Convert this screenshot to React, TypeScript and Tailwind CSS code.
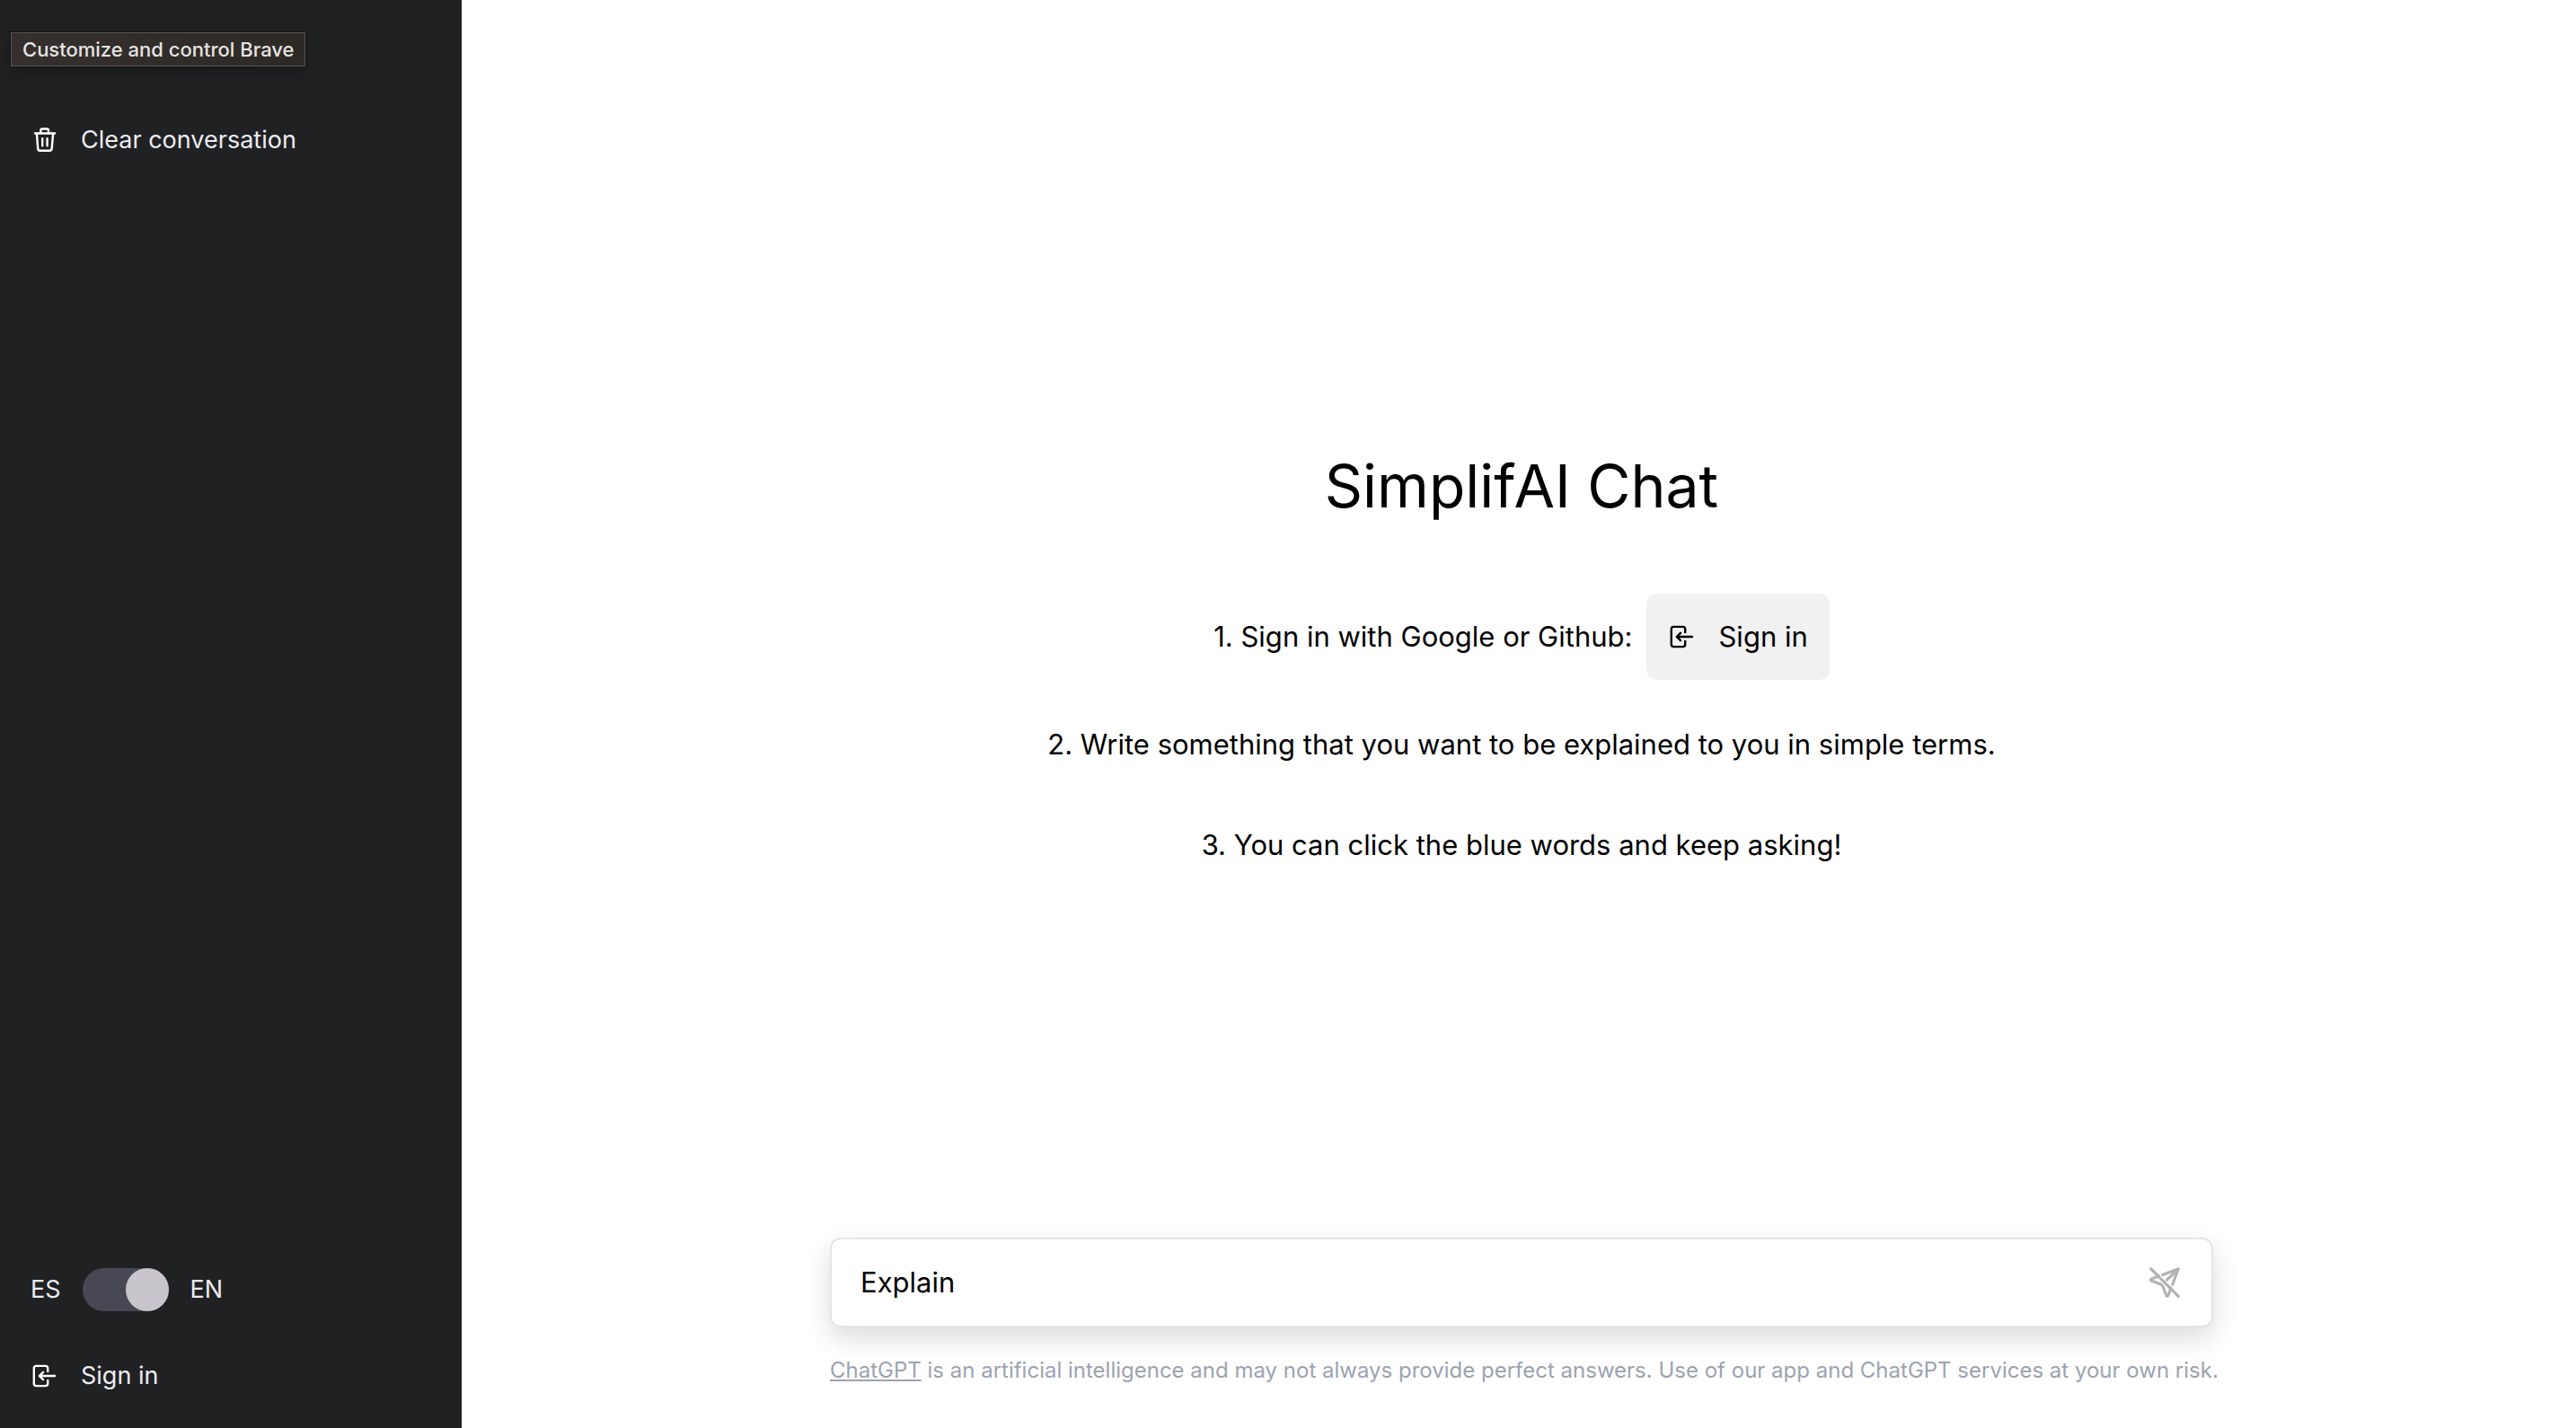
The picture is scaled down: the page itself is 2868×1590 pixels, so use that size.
import { useState } from "react";

function TrashIcon() {
  return (
    <svg viewBox="0 0 32 32" className="size-8 shrink-0" fill="none" stroke="currentColor" strokeWidth="2.4" strokeLinecap="round" strokeLinejoin="round" aria-hidden="true">
      <path d="M5 8.5H27" />
      <path d="M11.3 8V5.2Q11.3 3.5 13 3.5H18.3Q20 3.5 20 5.2V8" />
      <path d="M6.9 8.8L8.2 25.3Q8.4 27.7 10.6 27.7H21.2Q23.4 27.7 23.7 25.3L25.1 8.8" />
      <path d="M13.2 14.3V22.3M18.6 14.3V22.3" />
    </svg>
  );
}

function SignInIcon() {
  return (
    <svg viewBox="0 0 32 32" className="size-8 shrink-0" fill="none" stroke="currentColor" strokeWidth="2.4" strokeLinecap="butt" strokeLinejoin="round" aria-hidden="true">
      <path d="M19.2 12V7.5Q19.2 4.9 16.6 4.9H6.4Q3.8 4.9 3.8 7.5V24.5Q3.8 27.1 6.4 27.1H16.6Q19.2 27.1 19.2 24.5V20" />
      <path d="M10 16H27M14 11.8L9.8 16L14 20.2" strokeLinecap="round" />
    </svg>
  );
}

function SendOffIcon() {
  return (
    <svg viewBox="0 0 40 40" className="size-10" fill="none" stroke="currentColor" strokeWidth="3.2" strokeLinecap="round" strokeLinejoin="round" aria-hidden="true">
      <path d="M4.7 4.7L35.3 35.3" />
      <path d="M17.7 11.4L35.2 4.8L28.7 22.3" />
      <path d="M33.5 6.5L22.5 17" />
      <path d="M13.5 13L5.2 16.1Q3.7 17 5.2 18L16 22L17.8 23.8L22 34.5Q23 36 23.9 34.5L27 26.3" />
    </svg>
  );
}

export default function App() {
  const [english, setEnglish] = useState(true);
  const [prompt, setPrompt] = useState("Explain");

  return (
    <div className="flex min-h-screen bg-white font-['Inter',sans-serif] text-black">
      <aside className="relative flex w-[514px] shrink-0 flex-col justify-between bg-[#202123] pt-[108px] pb-[10px] text-[27px] leading-8 text-[#ececf1]">
        <div
          role="tooltip"
          className="absolute top-9 left-3 border border-[#5c5955] bg-linear-to-r from-[#352f2d] to-[#2d2a26] px-3 py-[3px] text-[22px] leading-[30px] font-medium whitespace-nowrap text-[#e5e4e2] shadow-[0_0_0_1px_#101112,0_6px_16px_rgba(0,0,0,0.25)]"
        >
          Customize and control Brave
        </div>

        <button type="button" className="flex h-24 items-center gap-6 px-[34px]">
          <span className="text-white"><TrashIcon /></span>
          Clear conversation
        </button>

        <div className="flex flex-col">
          <label className="flex h-24 cursor-pointer items-center gap-6 px-[34px]">
            <span>ES</span>
            <input
              type="checkbox"
              role="switch"
              aria-label="Language: Spanish or English"
              checked={english}
              onChange={(e) => setEnglish(e.target.checked)}
              className="h-12 w-24 appearance-none rounded-full bg-[#474854] before:block before:size-12 before:rounded-full before:bg-[#c8c6cc] checked:before:ml-12"
            />
            <span>EN</span>
          </label>
          <button type="button" className="flex h-24 items-center gap-6 px-[34px]">
            <span className="text-white"><SignInIcon /></span>
            Sign in
          </button>
        </div>
      </aside>

      <main className="flex min-w-0 flex-1 flex-col pl-[6px]">
        <section className="flex flex-1 flex-col items-center justify-center pt-[88px] text-[31px] leading-12">
          <h1 className="text-[66px] leading-20">SimplifAI Chat</h1>
          <div className="mt-20 flex items-center gap-4">
            <p>1. Sign in with Google or Github:</p>
            <button type="button" className="flex h-24 items-center gap-6 rounded-xl bg-[#f1f1f1] px-6">
              <SignInIcon />
              Sign in
            </button>
          </div>
          <p className="mt-12">2. Write something that you want to be explained to you in simple terms.</p>
          <p className="mt-16">3. You can click the blue words and keep asking!</p>
        </section>

        <footer className="mx-auto flex w-full max-w-[1540px] flex-col pb-12">
          <form
            onSubmit={(e) => e.preventDefault()}
            className="flex h-[100px] items-center rounded-xl border-2 border-[#e5e5eb] bg-white bg-clip-padding px-8 shadow-[0_12px_30px_rgba(0,0,0,0.14)]"
          >
            <input
              type="text"
              aria-label="Message"
              value={prompt}
              onChange={(e) => setPrompt(e.target.value)}
              className="min-w-0 flex-1 text-[31px] leading-12 outline-none"
            />
            <button type="submit" aria-label="Send" className="text-[#b3b3b3]">
              <SendOffIcon />
            </button>
          </form>
          <p className="mt-8 text-center text-[24px] leading-8 whitespace-nowrap text-[#9ca3af]">
            <a href="#chatgpt" className="underline underline-offset-2">ChatGPT</a> is an artificial intelligence and may not always provide perfect answers. Use of our app and ChatGPT services at your own risk.
          </p>
        </footer>
      </main>
    </div>
  );
}
